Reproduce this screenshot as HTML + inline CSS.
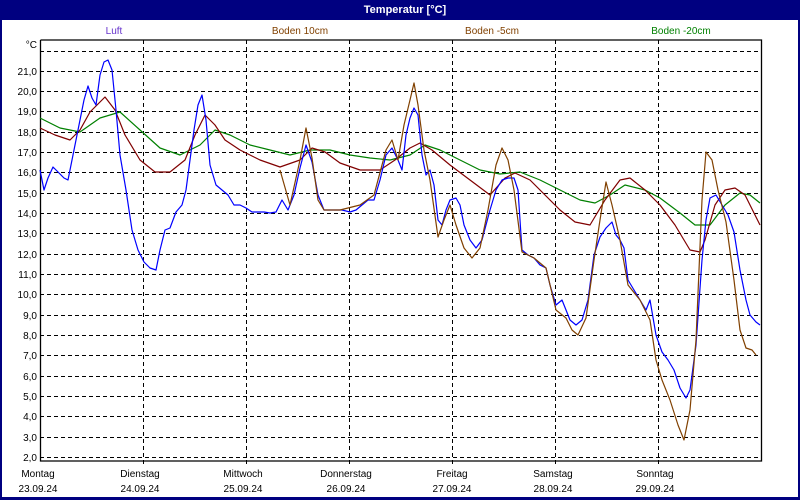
<!DOCTYPE html>
<html><head><meta charset="utf-8"><style>
html,body{margin:0;padding:0;background:#fff;}
svg{display:block;font-family:"Liberation Sans",Tahoma,sans-serif;}
</style></head><body>
<svg width="800" height="500" viewBox="0 0 800 500" xmlns="http://www.w3.org/2000/svg">
<rect x="0" y="0" width="800" height="500" fill="#000080"/>
<rect x="2" y="20" width="796" height="477" fill="#fff"/>
<text x="405" y="13" fill="#fff" font-size="11" font-weight="bold" text-anchor="middle">Temperatur [°C]</text>
<g font-size="10" text-anchor="middle">
<text x="114" y="34" fill="#6633cc">Luft</text>
<text x="300" y="34" fill="#804000">Boden 10cm</text>
<text x="492" y="34" fill="#804000">Boden -5cm</text>
<text x="681" y="34" fill="#008000">Boden -20cm</text>
</g>
<g stroke="#000" stroke-dasharray="4,3" stroke-width="1">
<path d="M40 51.5H761M40 71.5H761M40 91.5H761M40 111.5H761M40 132.5H761M40 152.5H761M40 172.5H761M40 193.5H761M40 213.5H761M40 233.5H761M40 254.5H761M40 274.5H761M40 294.5H761M40 315.5H761M40 335.5H761M40 355.5H761M40 376.5H761M40 396.5H761M40 416.5H761M40 437.5H761M40 457.5H761"/>
<path d="M143.5 40V464M246.5 40V464M349.5 40V464M452.5 40V464M555.5 40V464M658.5 40V464"/>
</g>
<path d="M40.5 40V461H761.5V40H40.5" fill="none" stroke="#000" stroke-width="1.3"/>
<g font-size="10" text-anchor="end" fill="#000">
<text x="37" y="48">°C</text>
<text x="37" y="75">21,0</text><text x="37" y="95">20,0</text><text x="37" y="115">19,0</text><text x="37" y="136">18,0</text><text x="37" y="156">17,0</text><text x="37" y="176">16,0</text><text x="37" y="197">15,0</text><text x="37" y="217">14,0</text><text x="37" y="237">13,0</text><text x="37" y="258">12,0</text><text x="37" y="278">11,0</text><text x="37" y="298">10,0</text><text x="37" y="319">9,0</text><text x="37" y="339">8,0</text><text x="37" y="359">7,0</text><text x="37" y="380">6,0</text><text x="37" y="400">5,0</text><text x="37" y="420">4,0</text><text x="37" y="441">3,0</text><text x="37" y="461">2,0</text>
</g>
<g font-size="10" text-anchor="middle" fill="#000">
<text x="38" y="477">Montag</text><text x="38" y="492">23.09.24</text>
<text x="140" y="477">Dienstag</text><text x="140" y="492">24.09.24</text>
<text x="243" y="477">Mittwoch</text><text x="243" y="492">25.09.24</text>
<text x="346" y="477">Donnerstag</text><text x="346" y="492">26.09.24</text>
<text x="452" y="477">Freitag</text><text x="452" y="492">27.09.24</text>
<text x="553" y="477">Samstag</text><text x="553" y="492">28.09.24</text>
<text x="655" y="477">Sonntag</text><text x="655" y="492">29.09.24</text>
</g>
<g fill="none" stroke-width="1.2" stroke-linejoin="round">
<polyline stroke="#008000" points="40,118 60,128 80,132 100,118 120,112 140,130 160,148 180,155 200,145 215,130 230,135 250,145 270,150 290,155 310,150 330,150 350,155 370,158 390,160 410,155 425,145 440,150 460,160 480,170 500,174 520,172 540,180 560,190 580,200 595,203 610,195 625,185 645,190 660,198 680,213 695,225 710,225 725,205 740,193 750,195 760,203"/>
<polyline stroke="#800000" points="40,128 55,135 70,140 80,130 90,112 105,97 115,110 125,135 140,160 155,172 170,172 185,160 195,135 205,115 215,125 225,140 240,150 260,160 280,167 300,160 312,148 325,152 340,163 360,170 380,170 395,160 410,148 420,143 432,150 450,165 470,180 490,195 505,178 515,173 530,180 545,195 560,210 575,222 590,225 605,200 620,180 630,178 645,190 660,205 675,225 690,250 700,252 705,240 715,205 725,190 735,188 745,195 755,215 760,225"/>
<polyline stroke="#0000ff" points="40,170 44,190 48,178 53,167 58,172 64,178 68,180 72,160 78,130 84,100 88,86 92,98 96,105 100,75 104,62 108,60 112,70 116,110 120,155 126,190 132,230 138,250 144,262 150,268 156,270 160,250 165,230 170,228 176,212 182,205 186,190 190,160 194,130 198,105 202,95 206,120 210,165 216,185 222,190 228,195 234,205 240,205 246,208 252,212 258,212 264,212 270,213 276,212 282,200 288,210 294,195 300,168 306,145 312,162 318,195 324,210 330,210 336,210 342,210 350,212 356,210 362,205 368,200 374,200 380,180 386,155 392,148 398,160 402,170 406,135 410,118 414,108 418,115 422,155 426,175 430,170 434,185 438,220 442,225 446,210 450,200 456,198 460,205 464,225 470,240 476,248 482,240 486,225 490,210 496,190 502,180 508,178 514,178 518,190 522,250 528,255 534,258 540,265 546,268 550,285 556,305 562,300 566,310 570,320 576,325 582,320 588,300 594,255 600,237 606,228 612,222 616,235 620,240 624,248 628,280 634,290 640,300 646,310 650,300 656,335 662,352 668,360 674,370 680,388 686,398 690,390 696,345 702,260 706,220 710,198 716,195 722,205 728,215 734,232 740,270 746,300 750,315 756,322 760,325"/>
<polyline stroke="#804000" points="280,170 290,205 300,160 306,128 312,158 318,200 324,210 340,210 360,205 374,195 386,150 392,140 398,160 404,125 410,100 414,83 418,105 424,150 430,180 438,237 444,220 450,205 456,225 464,248 472,258 480,248 488,210 496,165 502,148 508,160 514,190 522,252 534,258 546,268 556,310 566,318 572,330 578,335 586,318 594,260 600,220 606,182 612,205 620,240 628,285 640,300 650,320 656,360 662,380 670,400 678,425 684,440 690,410 696,340 702,200 706,152 712,160 718,190 726,222 734,280 740,330 746,348 752,350 756,355"/>
</g>
</svg>
</body></html>
